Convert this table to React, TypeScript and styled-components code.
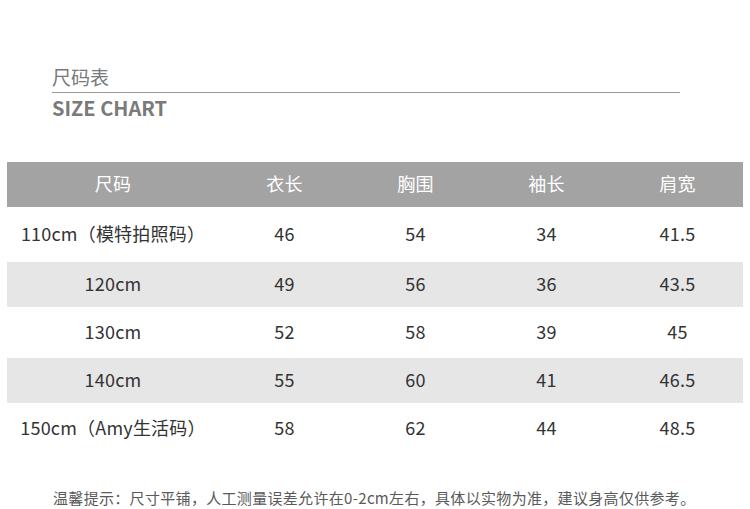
import React from "react";
import styled, { createGlobalStyle } from "styled-components";

const Global = createGlobalStyle`
  html, body { margin: 0; padding: 0; background: #fff; }
  body { font-family: "Noto Sans CJK SC", "Noto Sans", sans-serif; }
`;

const Page = styled.div`
  width: 750px;
  height: 509px;
  padding-top: 64px;
  box-sizing: border-box;
  overflow: hidden;
`;

const TitleBlock = styled.div`
  margin-left: 52px;
  width: 628px;
`;

const CnTitle = styled.div`
  font-size: 19px;
  line-height: 26px;
  color: #7a7a7a;
  padding-bottom: 2px;
  border-bottom: 1px solid #9a9a9a;
`;

const EnTitle = styled.div`
  font-size: 20px;
  line-height: 26px;
  font-weight: 700;
  color: #7a7a7a;
  margin-top: 2px;
`;

const Table = styled.div`
  margin: 41px 0 0 7px;
  width: 736px;
  display: grid;
  grid-template-columns: 212px repeat(4, 131px);
`;

const Row = styled.div<{ $h: number; $bg: string }>`
  display: contents;
  & > div {
    height: ${(p) => p.$h}px;
    background: ${(p) => p.$bg};
  }
`;

const Cell = styled.div<{ $head?: boolean }>`
  display: flex;
  align-items: center;
  justify-content: center;
  box-sizing: border-box;
  padding-bottom: 3px;
  font-size: 18px;
  letter-spacing: 0.2px;
  color: ${(p) => (p.$head ? "#ffffff" : "#333333")};
  white-space: nowrap;
`;

const Note = styled.div`
  margin-top: 34px;
  padding-left: 53px;
  font-size: 15px;
  letter-spacing: 0.32px;
  color: #5a5a5a;
  white-space: nowrap;
`;

const rows: { h: number; bg: string; cells: string[] }[] = [
  { h: 55, bg: "#fff", cells: ["110cm（模特拍照码）", "46", "54", "34", "41.5"] },
  { h: 45, bg: "#e6e6e6", cells: ["120cm", "49", "56", "36", "43.5"] },
  { h: 51, bg: "#fff", cells: ["130cm", "52", "58", "39", "45"] },
  { h: 45, bg: "#e6e6e6", cells: ["140cm", "55", "60", "41", "46.5"] },
  { h: 50, bg: "#fff", cells: ["150cm（Amy生活码）", "58", "62", "44", "48.5"] },
];

export default function App() {
  return (
    <Page>
      <Global />
      <TitleBlock>
        <CnTitle>尺码表</CnTitle>
        <EnTitle>SIZE CHART</EnTitle>
      </TitleBlock>
      <Table>
        <Row $h={45} $bg="#a3a3a3">
          {["尺码", "衣长", "胸围", "袖长", "肩宽"].map((t) => (
            <Cell key={t} $head>
              {t}
            </Cell>
          ))}
        </Row>
        {rows.map((r, i) => (
          <Row key={i} $h={r.h} $bg={r.bg}>
            {r.cells.map((c, j) => (
              <Cell key={j}>{c}</Cell>
            ))}
          </Row>
        ))}
      </Table>
      <Note>温馨提示：尺寸平铺，人工测量误差允许在0-2cm左右，具体以实物为准，建议身高仅供参考。</Note>
    </Page>
  );
}
